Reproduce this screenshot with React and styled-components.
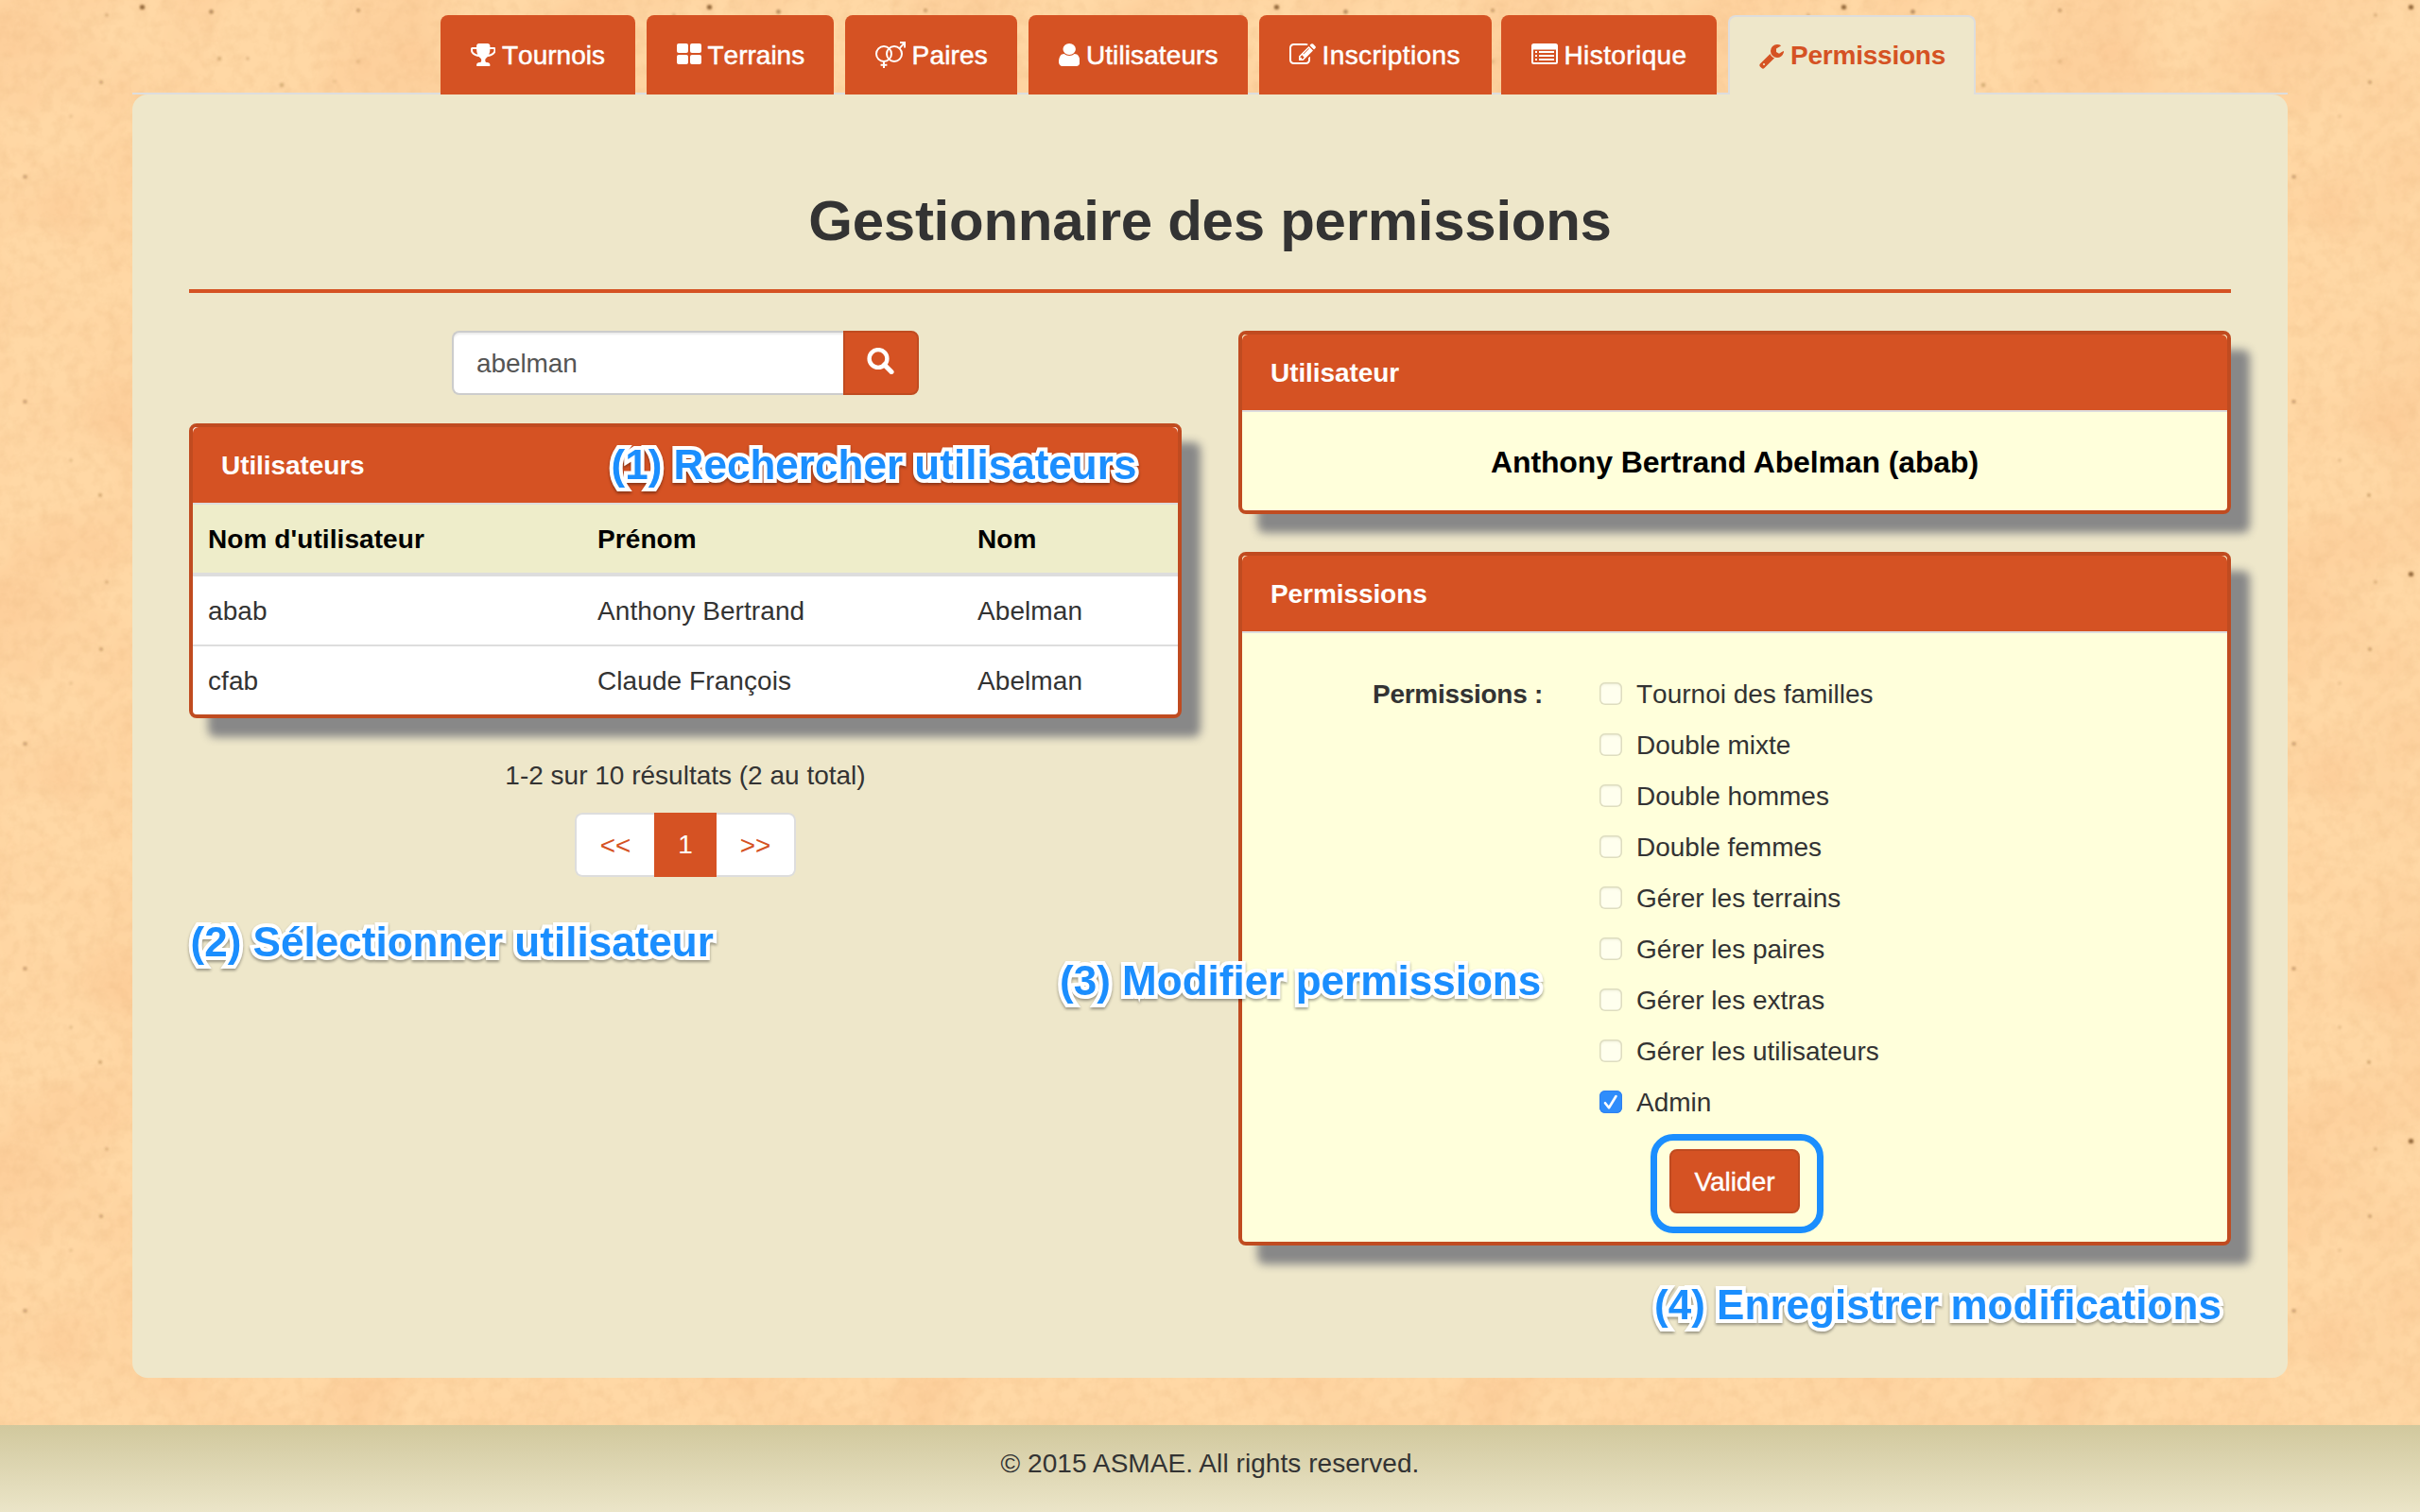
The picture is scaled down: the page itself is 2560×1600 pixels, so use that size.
import React from "react";
import styled, { createGlobalStyle, css } from "styled-components";

const orange = "#d55223";
const orangeDark = "#c04b20";
const sand = "#eee7ca";
const sans = `"Liberation Sans", Arial, Helvetica, sans-serif`;

const specks = [
  [150.5, 7.5, 2.6, 0.7],
  [223.5, 12.5, 2.4, 0.45],
  [379, 11, 2.2, 0.3],
  [113, 16, 2, 0.2],
  [232, 62, 2.2, 0.22],
  [262, 62, 2, 0.18],
  [379, 65, 2.2, 0.12],
  [298, 90, 2.4, 0.24],
  [354, 86, 2, 0.1],
  [107, 87, 2.2, 0.28],
  [75, 123, 2, 0.12],
  [26.5, 187, 2.3, 0.3],
  [26.5, 425, 2.3, 0.3],
  [75, 487, 2, 0.14],
  [106, 524, 2.2, 0.26],
];

const paper = `<svg xmlns='http://www.w3.org/2000/svg' width='600' height='600'>
<filter id='b' x='0' y='0' width='100%' height='100%' color-interpolation-filters='sRGB'><feTurbulence type='fractalNoise' baseFrequency='0.009' numOctaves='4' seed='4' stitchTiles='stitch'/><feColorMatrix values='0 0 0 0 0.98  0 0 0 0 0.76  0 0 0 0 0.55  1 0 0 0 -0.36'/></filter>
<filter id='g' x='0' y='0' width='100%' height='100%' color-interpolation-filters='sRGB'><feTurbulence type='fractalNoise' baseFrequency='0.07' numOctaves='4' seed='9' stitchTiles='stitch'/><feColorMatrix values='0 0 0 0 0.9  0 0 0 0 0.7  0 0 0 0 0.48  0.5 0 0 0 -0.2'/></filter>
<filter id='s'><feGaussianBlur stdDeviation='0.9'/></filter>
<rect width='600' height='600' fill='#ffd8a5'/>
<rect width='600' height='600' filter='url(#b)'/>
<rect width='600' height='600' filter='url(#g)'/>
<g fill='#6b3f14' filter='url(#s)'>${specks
  .map(([x, y, r, o]) => `<circle cx='${x}' cy='${y}' r='${r}' opacity='${o}'/>`)
  .join("")}</g></svg>`;

const paperUrl = `data:image/svg+xml,${encodeURIComponent(paper).replace(/'/g, "%27").replace(/\(/g, "%28").replace(/\)/g, "%29")}`;

const GlobalStyle = createGlobalStyle`
  * { box-sizing: border-box; }
  body {
    margin: 0;
    background: #ffd5a0 url("${paperUrl}") 0 0 / 600px 600px;
    color: #333;
    font: 28px/40px ${sans};
  }
`;

const Page = styled.div`
  position: relative;
  display: flex;
  flex-direction: column;
  width: 2560px;
  height: 1600px;
  padding-top: 16px;
  overflow: hidden;
`;

const Tabs = styled.nav`
  display: flex;
  width: 2280px;
  height: 84px;
  margin: 0 auto;
  padding-left: 326px;
  box-shadow: inset 0 -2px #ddd;
`;

const Tab = styled.a`
  display: flex;
  align-items: center;
  width: ${(p) => p.$width}px;
  margin-right: ${(p) => p.$after ?? 12}px;
  padding-left: 31.5px;
  gap: 7px;
  border-radius: 8px 8px 0 0;
  background: ${orange};
  color: #fff;
  letter-spacing: ${(p) => p.$tracking ?? 0}px;
  font-kerning: none;
  white-space: nowrap;
  -webkit-text-stroke: 0.5px currentColor;

  ${(p) =>
    p.$active &&
    css`
      padding-left: 31px;
      border: 2px solid #ddd;
      border-bottom: 0;
      background: ${sand};
      color: ${orange};
      font-weight: bold;
      -webkit-text-stroke: 0;
    `}

  svg {
    flex: none;
    display: block;
  }
`;

const TabLabel = styled.span`
  padding-top: ${(p) => (p.$active ? 0 : 2)}px;
`;

const Sheet = styled.main`
  width: 2280px;
  height: 1358px;
  margin: 0 auto;
  padding: 100px 60px 0;
  border-radius: 16px;
  background: ${sand};
`;

const Title = styled.h2`
  height: 110px;
  margin: 0 0 40px;
  padding-top: 1px;
  border-bottom: 4px solid ${orange};
  font-size: 60px;
  line-height: 66px;
  letter-spacing: -0.27px;
  text-align: center;
`;

const Columns = styled.div`
  display: grid;
  grid-template-columns: 1050px 1050px;
  gap: 60px;
`;

const Column = styled.section`
  display: flex;
  flex-direction: column;
`;

const Search = styled.div`
  display: flex;
  width: 494px;
  height: 68px;
  margin: 0 auto 30px;
`;

const SearchField = styled.div`
  flex: 1;
  padding: 13px 24px 11px;
  border: 2px solid #ccc;
  border-right: 0;
  border-radius: 8px 0 0 8px;
  background: #fff;
  box-shadow: inset 0 2px 2px rgba(0, 0, 0, 0.075);
  color: #555;
  letter-spacing: -0.1px;
`;

const SearchButton = styled.button`
  width: 80px;
  padding: 0 2px 4px 0;
  border: 2px solid ${orangeDark};
  border-radius: 0 8px 8px 0;
  background: ${orange};
  display: flex;
  align-items: center;
  justify-content: center;
`;

const Panel = styled.div`
  margin-bottom: 40px;
  border: 4px solid ${orangeDark};
  border-radius: 8px;
  background: ${(p) => p.$fill ?? "#fff"};
  box-shadow: 20px 20px 10px #888;
`;

const PanelHead = styled.header`
  height: 82px;
  padding: 21px 30px 19px;
  border-bottom: 2px solid #ddd;
  border-radius: 6px 6px 0 0;
  background: ${orange};
  color: #fff;
  font-weight: bold;
  letter-spacing: -0.08px;
`;

const Table = styled.div`
  display: grid;
  grid-template-columns: 412px 402px 1fr;
`;

const Cell = styled.div`
  height: ${(p) => (p.$last ? 72 : 74)}px;
  padding: 17px 16px 15px;
  border-bottom: ${(p) => (p.$last ? 0 : 2)}px solid #ddd;
  letter-spacing: 0.08px;
`;

const HeadCell = styled(Cell)`
  height: 76px;
  border-bottom-width: 4px;
  background: #eeedca;
  color: #000;
  font-weight: bold;
`;

const Results = styled.p`
  margin: 0 0 20px;
  padding-top: 1px;
  line-height: 39px;
  text-align: center;
`;

const Pager = styled.div`
  display: flex;
  width: 234px;
  height: 68px;
  margin: 0 auto;
  border-radius: 8px;
  overflow: hidden;
`;

const PagerItem = styled.a`
  flex: ${(p) => (p.$current ? "0 0 66px" : "1")};
  padding: ${(p) => (p.$current ? 12 : 13)}px 0 0;
  border: 2px solid ${(p) => (p.$current ? orange : "#ddd")};
  border-left-width: ${(p) => (p.$side === "right" ? 0 : 2)}px;
  border-right-width: ${(p) => (p.$side === "left" ? 0 : 2)}px;
  border-radius: ${(p) =>
    p.$side === "left" ? "8px 0 0 8px" : p.$side === "right" ? "0 8px 8px 0" : 0};
  background: ${(p) => (p.$current ? orange : "#fff")};
  color: ${(p) => (p.$current ? "#fff" : orange)};
  text-align: center;
`;

const UserName = styled.div`
  height: 104px;
  padding-top: 33px;
  color: #000;
  font-size: 32px;
  font-weight: bold;
  letter-spacing: -0.12px;
  text-align: center;
`;

const Form = styled.div`
  display: grid;
  grid-template-columns: 318px 1fr;
  column-gap: 60px;
  height: 644px;
  padding-top: 44px;
  align-content: start;
`;

const FormLabel = styled.div`
  padding-top: 1px;
  text-align: right;
  font-weight: bold;
  letter-spacing: -0.28px;
  white-space: nowrap;
`;

const Options = styled.div`
  display: flex;
  flex-direction: column;
  gap: 14px;
`;

const Option = styled.label`
  display: flex;
  align-items: center;
  gap: 15px;
  height: 40px;
  padding-top: 2px;
  font-kerning: none;
`;

const Box = styled.span`
  display: flex;
  align-items: center;
  justify-content: center;
  width: 24px;
  height: 24px;
  margin-top: -2px;
  border-radius: 6px;
  background: ${(p) => (p.$on ? "#2f8dfb" : "#ffffee")};
  box-shadow: ${(p) =>
    p.$on
      ? "inset 0 0 0 1px #2f80f0"
      : "inset 0 0 0 1.5px #deddbf, inset 0 2px 3px rgba(120, 120, 80, 0.15)"};
`;

const SubmitRow = styled.div`
  grid-column: 1 / -1;
  display: flex;
  justify-content: center;
  padding-top: 30px;
`;

const SubmitWrap = styled.div`
  position: relative;
  height: 68px;
`;

const Submit = styled.button`
  display: block;
  width: 138px;
  height: 68px;
  padding: 1px 0 0;
  border: 2px solid ${orangeDark};
  border-radius: 8px;
  background: ${orange};
  color: #fff;
  font: 28px/40px ${sans};
  -webkit-text-stroke: 0.4px #fff;
`;

const Ring = styled.span`
  position: absolute;
  top: -16px;
  left: -20px;
  width: 183px;
  height: 105px;
  border: 7px solid #1b8efe;
  border-radius: 24px;
`;

const Footer = styled.footer`
  height: 92px;
  margin-top: 50px;
  padding-top: 21px;
  background: linear-gradient(#d1c89d, #ebe5c8);
  letter-spacing: 0.06px;
  text-align: center;
`;

const Note = styled.div`
  position: absolute;
  left: ${(p) => p.$x}px;
  top: ${(p) => p.$y}px;
  color: #1b8efe;
  font-size: 44px;
  font-weight: bold;
  line-height: 50px;
  letter-spacing: 0.03px;
  white-space: nowrap;
  -webkit-text-stroke: 8px #fff;
  paint-order: stroke fill;
  filter: drop-shadow(0 2px 1.5px rgba(0, 0, 0, 0.36));
`;

const Trophy = () => (
  <svg width="26.5" height="28" viewBox="64 0 1664 1792" preserveAspectRatio="none" fill="currentColor">
    <path d="M522 883q-74-162-74-371h-256v96q0 78 94.5 162t235.5 113zm1078-275v-96h-256q0 209-74 371 141-29 235.5-113t94.5-162zm128-128v128q0 71-41.5 143t-112 130-173 97.5-215.5 44.5q-42 54-95 95-38 34-52.5 72.5t-14.5 89.5q0 54 30.5 91t97.5 37q75 0 133.5 45.5t58.5 114.5v64q0 14-9 23t-23 9h-832q-14 0-23-9t-9-23v-64q0-69 58.5-114.5t133.5-45.5q67 0 97.5-37t30.5-91q0-51-14.5-89.5t-52.5-72.5q-53-41-95-95-113-5-215.5-44.5t-173-97.5-112-130-41.5-143v-128q0-40 28-68t68-28h288v-96q0-66 47-113t113-47h576q66 0 113 47t47 113v96h288q40 0 68 28t28 68z" />
  </svg>
);

const Tiles = () => (
  <svg width="26" height="28" viewBox="0 0 26 28" fill="currentColor">
    <rect x="0" y="2" width="12" height="10" rx="2" />
    <rect x="14" y="2" width="12" height="10" rx="2" />
    <rect x="0" y="14" width="12" height="10" rx="2" />
    <rect x="14" y="14" width="12" height="10" rx="2" />
  </svg>
);

const VenusMars = () => (
  <svg width="32" height="28" viewBox="0 0 32 28" fill="none" stroke="currentColor" strokeWidth="2">
    <circle cx="9" cy="13" r="8" />
    <circle cx="20" cy="13" r="8" />
    <path d="M9 21v7M5.6 24.7h6.8M25.6 7.2L31 1.2M26 1h5v5.5" />
  </svg>
);

const User = () => (
  <svg width="22.4" height="28" viewBox="256 0 1280 1792" preserveAspectRatio="none" fill="currentColor">
    <path d="M1536 1399q0 109-62.5 187t-150.5 78h-854q-88 0-150.5-78t-62.5-187q0-85 8.5-160.5t31.5-152 58.5-131 94-89 134.5-34.5q131 128 313 128t313-128q76 0 134.5 34.5t94 89 58.5 131 31.5 152 8.5 160.5zm-256-887q0 159-112.5 271.5t-271.5 112.5-271.5-112.5-112.5-271.5 112.5-271.5 271.5-112.5 271.5 112.5 112.5 271.5z" />
  </svg>
);

const Edit = () => (
  <svg width="28" height="28" viewBox="0 0 1792 1792" fill="currentColor">
    <path d="M888 1184l116-116-152-152-116 116v56h96v96h56zm440-720q-16-16-33 1l-350 350q-17 17-1 33t33-1l350-350q17-17 1-33zm80 594v190q0 119-84.5 203.5t-203.5 84.5h-832q-119 0-203.5-84.5t-84.5-203.5v-832q0-119 84.5-203.5t203.5-84.5h832q63 0 117 25 15 7 18 23 3 17-9 29l-49 49q-14 14-32 8-23-6-45-6h-832q-66 0-113 47t-47 113v832q0 66 47 113t113 47h832q66 0 113-47t47-113v-126q0-13 9-22l64-64q15-15 35-7t20 29zm-96-738l288 288-672 672h-288v-288zm444 132l-92 92-288-288 92-92q28-28 68-28t68 28l152 152q28 28 28 68t-28 68z" />
  </svg>
);

const ListAlt = () => (
  <svg width="28" height="28" viewBox="0 0 28 28" fill="currentColor">
    <path
      fillRule="evenodd"
      d="M2.5 2h23A2.5 2.5 0 0 1 28 4.5v17A2.5 2.5 0 0 1 25.5 24h-23A2.5 2.5 0 0 1 0 21.5v-17A2.5 2.5 0 0 1 2.5 2zM2 8.500v13q0 .5.5.5h23q.5 0 .5-.5v-13z"
    />
    <path d="M4 10h2v2H4zM8 10h16v2H8zM4 14h2v2H4zM8 14h16v2H8zM4 18h2v2H4zM8 18h16v2H8z" />
  </svg>
);

const Wrench = () => (
  <svg width="26" height="28" viewBox="64 0 1664 1792" fill="currentColor">
    <path d="M448 1472q0-26-19-45t-45-19-45 19-19 45 19 45 45 19 45-19 19-45zm644-420l-682 682q-37 37-90 37-52 0-91-37l-106-108q-38-36-38-90 0-53 38-91l681-681q39 98 114.5 173.5t173.5 114.5zm634-435q0 39-23 106-47 134-164.5 217.5t-258.5 83.5q-185 0-316.5-131.5t-131.5-316.5 131.5-316.5 316.5-131.5q58 0 121.5 16.5t107.5 46.5q16 11 16 28t-16 28l-293 169v224l193 107q5-3 79-48.5t135.5-81 70.5-35.5q15 0 23.5 10t8.5 25z" />
  </svg>
);

const Magnifier = () => (
  <svg width="29" height="28" viewBox="0 0 29 28" fill="none" stroke="#fff">
    <circle cx="12" cy="11.5" r="9.4" strokeWidth="4.4" />
    <path d="M18.5 18l7.500 7.500" strokeWidth="5.2" strokeLinecap="round" />
  </svg>
);

const Check = () => (
  <svg width="16" height="18" viewBox="0 0 16 18" fill="none" stroke="#fff" strokeWidth="2.6" strokeLinecap="round" strokeLinejoin="round">
    <path d="M2 10.2l4 5L13.5 3" />
  </svg>
);

const tabs = [
  { label: "Tournois", icon: Trophy, width: 206 },
  { label: "Terrains", icon: Tiles, width: 198 },
  { label: "Paires", icon: VenusMars, width: 182, tracking: 0.2 },
  { label: "Utilisateurs", icon: User, width: 232, tracking: 0.1 },
  { label: "Inscriptions", icon: Edit, width: 246, after: 10, tracking: 0.4 },
  { label: "Historique", icon: ListAlt, width: 228, tracking: 0.4 },
  { label: "Permissions", icon: Wrench, width: 262, active: true, tracking: -0.22 },
];

const users = [
  ["abab", "Anthony Bertrand", "Abelman"],
  ["cfab", "Claude François", "Abelman"],
];

const permissions = [
  "Tournoi des familles",
  "Double mixte",
  "Double hommes",
  "Double femmes",
  "Gérer les terrains",
  "Gérer les paires",
  "Gérer les extras",
  "Gérer les utilisateurs",
  "Admin",
];

export default function App() {
  return (
    <>
      <GlobalStyle />
      <Page>
        <Tabs>
          {tabs.map(({ label, icon: Icon, width, after, active, tracking }) => (
            <Tab key={label} $width={width} $after={after} $active={active} $tracking={tracking}>
              <Icon />
              <TabLabel $active={active}>{label}</TabLabel>
            </Tab>
          ))}
        </Tabs>
        <Sheet>
          <Title>Gestionnaire des permissions</Title>
          <Columns>
            <Column>
              <Search>
                <SearchField>abelman</SearchField>
                <SearchButton aria-label="Rechercher">
                  <Magnifier />
                </SearchButton>
              </Search>
              <Panel>
                <PanelHead>Utilisateurs</PanelHead>
                <Table>
                  <HeadCell>Nom d'utilisateur</HeadCell>
                  <HeadCell>Prénom</HeadCell>
                  <HeadCell>Nom</HeadCell>
                  {users.map((row, i) =>
                    row.map((value, j) => (
                      <Cell key={`${i}-${j}`} $last={i === users.length - 1}>
                        {value}
                      </Cell>
                    ))
                  )}
                </Table>
              </Panel>
              <Results>1-2 sur 10 résultats (2 au total)</Results>
              <Pager>
                <PagerItem $side="left">&lt;&lt;</PagerItem>
                <PagerItem $current>1</PagerItem>
                <PagerItem $side="right">&gt;&gt;</PagerItem>
              </Pager>
            </Column>
            <Column>
              <Panel $fill="#ffffdb">
                <PanelHead>Utilisateur</PanelHead>
                <UserName>Anthony Bertrand Abelman (abab)</UserName>
              </Panel>
              <Panel $fill="#ffffdb">
                <PanelHead>Permissions</PanelHead>
                <Form>
                  <FormLabel>Permissions :</FormLabel>
                  <Options>
                    {permissions.map((name) => (
                      <Option key={name}>
                        <Box $on={name === "Admin"}>{name === "Admin" && <Check />}</Box>
                        {name}
                      </Option>
                    ))}
                  </Options>
                  <SubmitRow>
                    <SubmitWrap>
                      <Submit>Valider</Submit>
                      <Ring />
                    </SubmitWrap>
                  </SubmitRow>
                </Form>
              </Panel>
            </Column>
          </Columns>
        </Sheet>
        <Footer>© 2015 ASMAE. All rights reserved.</Footer>
        <Note $x={646.5} $y={467}>(1) Rechercher utilisateurs</Note>
        <Note $x={201.5} $y={972}>(2) Sélectionner utilisateur</Note>
        <Note $x={1121} $y={1013}>(3) Modifier permissions</Note>
        <Note $x={1750} $y={1356}>(4) Enregistrer modifications</Note>
      </Page>
    </>
  );
}
